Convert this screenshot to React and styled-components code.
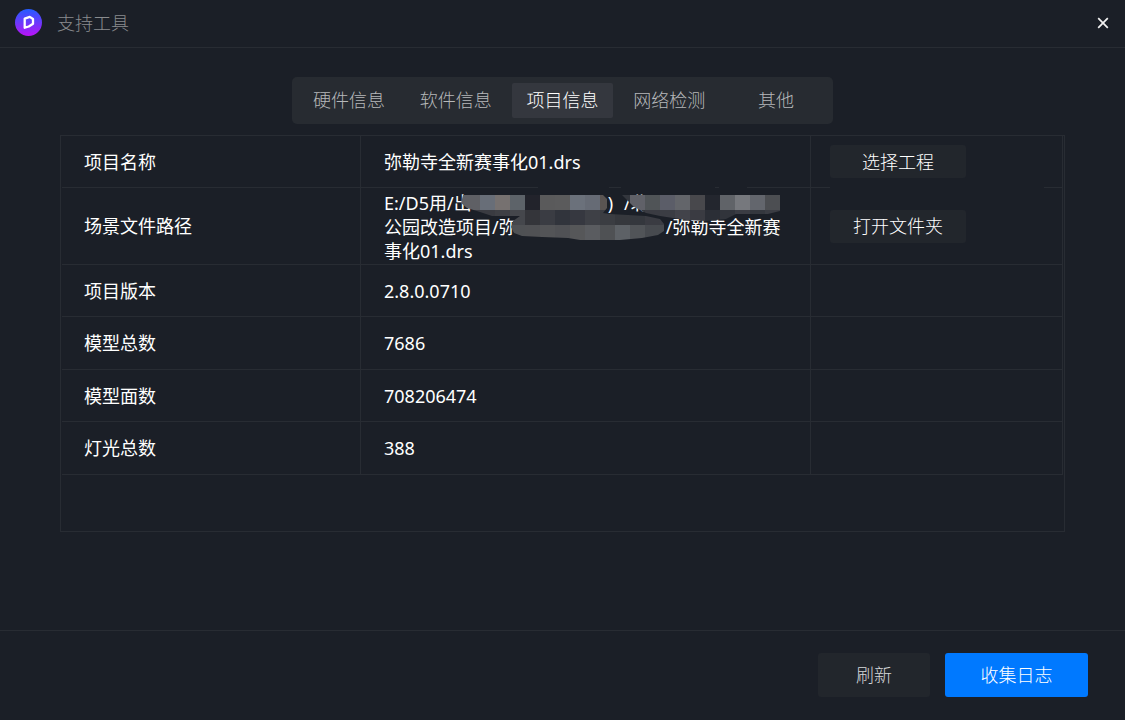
import React, { useState } from "react";
import styled, { createGlobalStyle, css } from "styled-components";

const color = {
  bg: "#1b1f27",
  line: "#282c33",
  bar: "#272b31",
  active: "#34373e",
  button: "#22262c",
  primary: "#0079ff",
};

const GlobalStyle = createGlobalStyle`
  * { box-sizing: border-box; }
  body {
    margin: 0;
    background: ${color.bg};
    color: #fff;
    font: 18px/24px "Noto Sans", "Noto Sans CJK SC", sans-serif;
  }
  button { font: inherit; border: 0; padding: 0; cursor: pointer; }
`;

const Window = styled.div`
  min-height: 100vh;
  display: flex;
  flex-direction: column;
`;

const TitleBar = styled.header`
  height: 48px;
  display: flex;
  align-items: center;
  gap: 14px;
  padding: 0 15px 2px;
  border-bottom: 1px solid ${color.line};
`;

const Title = styled.h1`
  flex: 1;
  margin: 0;
  font-size: 18px;
  font-weight: 300;
  color: #8a8c8f;
`;

const CloseButton = styled.button`
  width: 14px;
  height: 24px;
  display: flex;
  align-items: center;
  justify-content: center;
  background: none;
`;

const Main = styled.main`
  flex: 1;
  display: flex;
  flex-direction: column;
  gap: 11px;
  padding: 29px 60px 98px;
`;

const TabBar = styled.div`
  align-self: center;
  width: 541px;
  max-width: 100%;
  display: flex;
  gap: 5px;
  padding: 6px;
  background: ${color.bar};
  border-radius: 5px;
`;

const Tab = styled.button`
  flex: 1;
  height: 35px;
  padding-bottom: 2px;
  border-radius: 2px;
  font-weight: 300;
  color: ${(p) => (p.$active ? "#fff" : "#b6b8ba")};
  background: ${(p) => (p.$active ? color.active : "transparent")};
`;

const Panel = styled.section`
  flex: 1;
  padding: 0 1px;
  border: 1px solid ${color.line};
`;

const InfoTable = styled.table`
  width: 100%;
  table-layout: fixed;
  border-collapse: separate;
  border-spacing: 0;
`;

const cell = css`
  padding: 0 23px;
  border: solid ${color.line};
  border-width: 0 1px 1px 0;
  font-weight: 400;
  text-align: left;
  vertical-align: middle;
`;

const Row = styled.tr`
  height: ${(p) => (p.$tall ? 77 : 52)}px;

  &:nth-child(even) {
    height: ${(p) => (p.$tall ? 77 : 53)}px;
  }
`;

const Label = styled.th`
  ${cell}
  width: 299px;
  padding-left: 22px;
`;

const Value = styled.td`
  ${cell}
`;

const ActionCell = styled.td`
  ${cell}
  position: relative;
  width: 252px;
  padding: 0 18px 0 19px;

  ${(p) =>
    p.$covers &&
    css`
      &::before {
        content: "";
        position: absolute;
        top: -1px;
        left: 19px;
        right: 18px;
        height: 1px;
        background: ${color.bg};
      }
    `}
`;

const ActionButton = styled.button`
  display: block;
  width: 136px;
  height: 33px;
  border-radius: 3px;
  font-weight: 300;
  color: #fff;
  background: ${color.button};
`;

const Path = styled.div`
  position: relative;
  padding-top: 2px;
  white-space: nowrap;
`;

const PathLine = styled.div`
  display: flex;
`;

const Hidden = styled.span`
  width: ${(p) => p.$width}px;
`;

const MosaicSvg = styled.svg`
  position: absolute;
  top: -5px;
  left: 66px;
`;

const Footer = styled.footer`
  display: flex;
  justify-content: flex-end;
  gap: 15px;
  padding: 22px 37px 23px;
  border-top: 1px solid ${color.line};
`;

const FooterButton = styled.button`
  width: ${(p) => (p.$primary ? 143 : 112)}px;
  height: 44px;
  border-radius: 3px;
  font-weight: 300;
  color: ${(p) => (p.$primary ? "#fff" : "#d6d8da")};
  background: ${(p) => (p.$primary ? color.primary : color.button)};
`;

const Logo = () => (
  <svg width="28" height="28" viewBox="0 0 28 28" aria-hidden="true">
    <defs>
      <linearGradient id="logo" x1="0" y1="0" x2="0" y2="1">
        <stop offset="0" stopColor="#245cff" />
        <stop offset="0.5" stopColor="#6a39fb" />
        <stop offset="1" stopColor="#bb12f6" />
      </linearGradient>
    </defs>
    <circle cx="13.5" cy="13.5" r="13.5" fill="url(#logo)" />
    <path
      d="M9.7 9.7 L14.8 7.9 L18 10 V14.7 L13.8 17.5 L9.7 18.7 Z"
      fill="none"
      stroke="#fff"
      strokeWidth="2.3"
      strokeLinejoin="round"
    />
  </svg>
);

const CloseIcon = () => (
  <svg width="12" height="12" viewBox="0 0 12 12" aria-hidden="true">
    <path d="M1.2 1.2 L10.8 10.8 M10.8 1.2 L1.2 10.8" stroke="#f2f2f2" strokeWidth="1.7" />
  </svg>
);

const tiles = [
  {
    y: 11,
    fills:
      "5f6065 5f6065 686e78 767170 5d6369 22232b 5a5a5b 5b5b5c 6b717b 666b75 5a5452 33363d 606168 505457 5b5d68 63656a 48484c 23262e 606368 76787d 63666d 4c4e52",
  },
  {
    y: 26,
    fills:
      "3a3b41 3a3b41 3a3b41 3e3f44 45474c 34353a 3a3c43 31343c 363840 3e4046 3b3d42 36383d 34373d 3a3b42 3b3d44 42434a 3a3b42 2b2e36 31343b 3a3c43 34373e 3a3c43",
  },
  {
    y: 41,
    fills:
      "4f5154 4f5154 4f5154 4f5154 4f5154 505154 535457 505155 565759 5a5c60 4f5154 5d6166 515458 474a4f 474a4f",
  },
];

const Mosaic = () => (
  <MosaicSvg width="332" height="58" viewBox="0 0 332 58" aria-hidden="true">
    <defs>
      <clipPath id="smudge">
        <path d="M13 11 H153 L157 15 V24 L153 29 L160 30 L196 32 L210 35 L214 40 V47 L208 51 L192 54 L170 56 H130 L118 54 L92 53 L72 52 L64 49 L61 43 L63 37 L70 32 H42 L30 28 L17 24 L11 19 Z" />
        <path d="M172 11 H330 V27 L318 30 H286 L276 35 L256 37 L236 36 L210 32 L196 29 L184 23 Z" />
      </clipPath>
    </defs>
    <path d="M88 3.5 H159 M171 3.5 H265 M269 3.5 H297" stroke={color.bg} />
    <g clipPath="url(#smudge)">
      {tiles.map((row) =>
        row.fills
          .split(" ")
          .map((fill, i) => (
            <rect
              key={`${row.y}-${i}`}
              x={i * 15}
              y={row.y}
              width="15"
              height="15"
              fill={`#${fill}`}
              shapeRendering="crispEdges"
            />
          ))
      )}
    </g>
  </MosaicSvg>
);

const ScenePath = () => (
  <Path>
    <PathLine>
      <span>E:/D5用/出</span>
      <Hidden $width={136} />
      <span>)</span>
      <Hidden $width={11} />
      <span>/北</span>
    </PathLine>
    <PathLine>
      <span>公园改造项目/弥</span>
      <Hidden $width={149} />
      <span>/弥勒寺全新赛</span>
    </PathLine>
    <PathLine>事化01.drs</PathLine>
    <Mosaic />
  </Path>
);

const tabs = ["硬件信息", "软件信息", "项目信息", "网络检测", "其他"];

const rows = [
  { label: "项目名称", value: "弥勒寺全新赛事化01.drs", action: "选择工程" },
  { label: "场景文件路径", value: <ScenePath />, action: "打开文件夹", tall: true },
  { label: "项目版本", value: "2.8.0.0710" },
  { label: "模型总数", value: "7686" },
  { label: "模型面数", value: "708206474" },
  { label: "灯光总数", value: "388" },
];

export default function App() {
  const [active, setActive] = useState(2);

  return (
    <Window>
      <GlobalStyle />
      <TitleBar>
        <Logo />
        <Title>支持工具</Title>
        <CloseButton aria-label="关闭">
          <CloseIcon />
        </CloseButton>
      </TitleBar>
      <Main>
        <TabBar role="tablist">
          {tabs.map((name, i) => (
            <Tab
              key={name}
              role="tab"
              aria-selected={i === active}
              $active={i === active}
              onClick={() => setActive(i)}
            >
              {name}
            </Tab>
          ))}
        </TabBar>
        <Panel role="tabpanel" aria-label={tabs[active]}>
          <InfoTable>
            <tbody>
              {rows.map((row) => (
                <Row key={row.label} $tall={row.tall}>
                  <Label scope="row">{row.label}</Label>
                  <Value>{row.value}</Value>
                  <ActionCell $covers={row.tall}>
                    {row.action && <ActionButton>{row.action}</ActionButton>}
                  </ActionCell>
                </Row>
              ))}
            </tbody>
          </InfoTable>
        </Panel>
      </Main>
      <Footer>
        <FooterButton>刷新</FooterButton>
        <FooterButton $primary>收集日志</FooterButton>
      </Footer>
    </Window>
  );
}
